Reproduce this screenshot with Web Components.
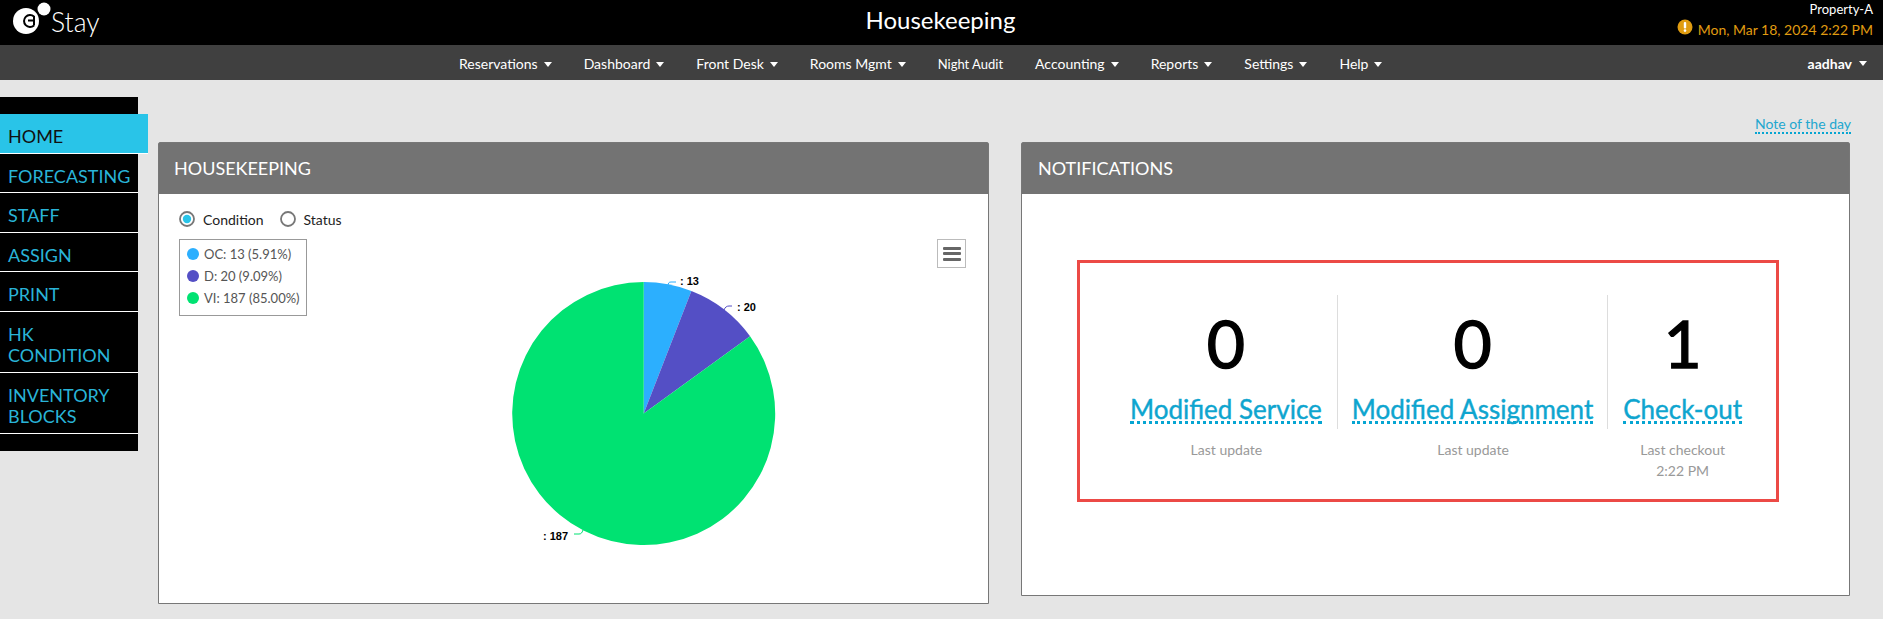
<!DOCTYPE html>
<html lang="en">
<head>
<meta charset="utf-8">
<title>Housekeeping</title>
<style>
  html, body { margin: 0; padding: 0; }
  body { background: #e5e5e5; font-family: Lato, "Open Sans", sans-serif; color: #333; }
</style>
</head>
<body>
<app-header page-title="Housekeeping" property="Property-A" clock="Mon, Mar 18, 2024 2:22 PM"></app-header>
<app-nav user="aadhav">
  <nav-item>Reservations</nav-item>
  <nav-item>Dashboard</nav-item>
  <nav-item>Front Desk</nav-item>
  <nav-item>Rooms Mgmt</nav-item>
  <nav-item plain>Night Audit</nav-item>
  <nav-item>Accounting</nav-item>
  <nav-item>Reports</nav-item>
  <nav-item>Settings</nav-item>
  <nav-item>Help</nav-item>
</app-nav>
<page-shell>
  <side-menu slot="side">
    <side-item active>HOME</side-item>
    <side-item>FORECASTING</side-item>
    <side-item>STAFF</side-item>
    <side-item>ASSIGN</side-item>
    <side-item>PRINT</side-item>
    <side-item>HK<br>CONDITION</side-item>
    <side-item>INVENTORY<br>BLOCKS</side-item>
  </side-menu>
  <dash-panel heading="HOUSEKEEPING" tall>
    <condition-radios></condition-radios>
    <pie-chart></pie-chart>
  </dash-panel>
  <dash-panel heading="NOTIFICATIONS">
    <stat-box>
      <stat-tile value="0" label="Modified Service" note="Last update"></stat-tile>
      <stat-tile value="0" label="Modified Assignment" note="Last update" narrow></stat-tile>
      <stat-tile value="1" label="Check-out" note="Last checkout" extra="2:22 PM" last></stat-tile>
    </stat-box>
  </dash-panel>
</page-shell>

<script>
// Small helper so each element only has to supply its markup.
function shadow (el, html) {
  el.attachShadow({ mode: 'open' }).innerHTML = html
}

customElements.define('app-header', class extends HTMLElement {
  connectedCallback () {
    shadow(this, `
      <style>
        :host { display: grid; grid-template-columns: 1fr auto 1fr; align-items: center; height: 45px; background: #000; color: #fff; }
        .brand { display: flex; align-items: center; padding-left: 12px; }
        .brand svg { margin-top: -9px; }
        .brand span { font-size: 26.5px; font-weight: 300; line-height: 31px; }
        h1 { margin: 0 2px 6px 0; font-size: 24px; font-weight: 400; }
        .info { justify-self: end; align-self: start; text-align: right; padding: 1px 10px 0 0; font-size: 13px; }
        .prop { line-height: 17px; }
        .time { display: flex; align-items: center; justify-content: flex-end; gap: 5px; margin-top: 1px; color: #e09c10; font-size: 14px; line-height: 22px; }
        .time svg { margin-top: -6px; }
      </style>
      <div class="brand">
        <svg width="39" height="36" viewBox="0 0 39 36">
          <circle cx="14" cy="21" r="13" fill="#fff"/>
          <circle cx="32" cy="9" r="6.5" fill="#fff"/>
          <path d="M22 16.5a6 6 0 1 0 0 9" fill="none" stroke="#000" stroke-width="2"/>
          <path d="M16 20.5h6v5M22 16v9.5" fill="none" stroke="#000" stroke-width="2"/>
        </svg>
        <span>Stay</span>
      </div>
      <h1>${this.getAttribute('page-title')}</h1>
      <div class="info">
        <div class="prop">${this.getAttribute('property')}</div>
        <div class="time">
          <svg width="16" height="16" viewBox="0 0 16 16"><circle cx="8" cy="8" r="7.5" fill="#e09c10"/><rect x="6.8" y="3" width="2.4" height="6.4" rx="1" fill="#fff"/><circle cx="8" cy="11.6" r="1.3" fill="#fff"/></svg>
          <span>${this.getAttribute('clock')}</span>
        </div>
      </div>`)
  }
})

customElements.define('app-nav', class extends HTMLElement {
  connectedCallback () {
    shadow(this, `
      <style>
        :host { display: flex; align-items: center; height: 35px; box-sizing: border-box; padding: 2px 0 0 459px; background: #404040; color: #fff; }
        .items { display: flex; align-items: center; gap: 32px; }
        .user { margin-left: auto; padding-right: 16px; font-size: 14px; font-weight: 700; display: flex; align-items: center; gap: 7px; }
        i { width: 0; height: 0; border: 4px solid transparent; border-top: 5px solid #fff; border-bottom: 0; }
      </style>
      <div class="items"><slot></slot></div>
      <div class="user">${this.getAttribute('user')}<i></i></div>`)
  }
})

customElements.define('nav-item', class extends HTMLElement {
  connectedCallback () {
    const plain = this.hasAttribute('plain')
    shadow(this, `
      <style>
        :host { display: flex; align-items: center; gap: 6px; font-size: ${plain ? 13 : 14}px; white-space: nowrap; }
        i { width: 0; height: 0; border: 4px solid transparent; border-top: 5px solid #fff; border-bottom: 0; margin-top: 2px; }
      </style>
      <slot></slot>${plain ? '' : '<i></i>'}`)
  }
})

customElements.define('page-shell', class extends HTMLElement {
  connectedCallback () {
    shadow(this, `
      <style>
        :host { display: flex; align-items: flex-start; }
        .main { flex: 1; min-width: 0; margin-left: 20px; padding-right: 33px; }
        .note { display: flex; justify-content: flex-end; height: 62px; align-items: flex-start; margin-right: -1px; }
        .note a { margin-top: 35px; font-size: 14px; line-height: 17px; color: #22a7cf; border-bottom: 2px dotted #06a5d2; }
        .cols { display: grid; grid-template-columns: 831fr 829fr; gap: 32px; align-items: start; }
      </style>
      <slot name="side"></slot>
      <div class="main">
        <div class="note"><a>Note of the day</a></div>
        <div class="cols"><slot></slot></div>
      </div>`)
  }
})

customElements.define('side-menu', class extends HTMLElement {
  connectedCallback () {
    shadow(this, `
      <style>
        :host { display: block; width: 138px; margin-top: 17px; padding: 17px 0; background: #000; }
      </style>
      <slot></slot>`)
  }
})

customElements.define('side-item', class extends HTMLElement {
  connectedCallback () {
    const active = this.hasAttribute('active')
    shadow(this, `
      <style>
        :host { display: block; box-sizing: border-box; width: ${active ? 148 : 138}px; padding: 12px 8px 5px; font-size: 18px; line-height: 21.5px; background: ${active ? '#29c4e8' : '#000'}; color: ${active ? '#111' : '#29b4d8'}; border-bottom: 1px solid #fff; }
      </style>
      <slot></slot>`)
  }
})

customElements.define('dash-panel', class extends HTMLElement {
  connectedCallback () {
    const tall = this.hasAttribute('tall')
    shadow(this, `
      <style>
        :host { display: block; box-sizing: border-box; height: ${tall ? 462 : 454}px; background: #fff; border: 1px solid #777; border-radius: 2px 2px 0 0; }
        h2 { margin: 0; height: 51px; box-sizing: border-box; padding: 13px ${tall ? 15 : 16}px 0; background: #737373; color: #fff; font-size: 18px; line-height: 24px; font-weight: 400; }
      </style>
      <h2>${this.getAttribute('heading')}</h2>
      <slot></slot>`)
  }
})

customElements.define('condition-radios', class extends HTMLElement {
  connectedCallback () {
    const radio = on => `<svg width="16" height="16" viewBox="0 0 16 16"><circle cx="8" cy="8" r="7" fill="#fff" stroke="#777" stroke-width="1.8"/>${on ? '<circle cx="8" cy="8" r="4.2" fill="#29c4e8"/>' : ''}</svg>`
    shadow(this, `
      <style>
        :host { display: flex; align-items: center; height: 42px; box-sizing: border-box; padding: 8px 0 0 20px; font-size: 14px; color: #222; }
        label { display: flex; align-items: center; gap: 8px; margin-right: 16px; }
      </style>
      <label>${radio(true)}Condition</label>
      <label>${radio(false)}Status</label>`)
  }
})

customElements.define('pie-chart', class extends HTMLElement {
  connectedCallback () {
    const series = [
      { name: 'OC', y: 13, pct: '5.91', color: '#2caffe' },
      { name: 'D', y: 20, pct: '9.09', color: '#544fc5' },
      { name: 'VI', y: 187, pct: '85.00', color: '#00e272' }
    ]
    const cx = 484.7
    const cy = 177.6
    const r = 131.5
    const total = series.reduce((sum, s) => sum + s.y, 0)
    let start = 0
    const slices = series.map(s => {
      const end = start + s.y / total * Math.PI * 2
      const point = a => `${(cx + r * Math.sin(a)).toFixed(2)} ${(cy - r * Math.cos(a)).toFixed(2)}`
      const large = end - start > Math.PI ? 1 : 0
      const d = `M${cx} ${cy}L${point(start)}A${r} ${r} 0 ${large} 1 ${point(end)}Z`
      start = end
      return `<path d="${d}" fill="${s.color}"/>`
    }).join('')
    const legend = series.map(s => `<div class="row"><b style="background:${s.color}"></b>${s.name}: ${s.y} (${s.pct}%)</div>`).join('')
    shadow(this, `
      <style>
        :host { display: block; position: relative; height: 367px; }
        svg.pie { display: block; }
        text { font: 700 11px "Liberation Sans", Arial, sans-serif; fill: #000; }
        .legend { position: absolute; left: 20px; top: 3px; box-sizing: border-box; width: 128px; height: 77px; padding: 3px 0 0 7px; border: 1px solid #999; background: #fff; font-size: 13px; color: #555; }
        .row { display: flex; align-items: center; gap: 5px; height: 22px; white-space: nowrap; }
        .row b { width: 12px; height: 12px; border-radius: 50%; }
        .menu { position: absolute; left: 778px; top: 3px; box-sizing: border-box; width: 29px; height: 29px; border: 1px solid #bbb; display: flex; flex-direction: column; justify-content: center; align-items: center; gap: 2.5px; }
        .menu i { width: 18px; height: 3px; background: #666; border-radius: 1px; }
      </style>
      <svg class="pie" width="829" height="367" viewBox="0 0 829 367">
        ${slices}
        <g fill="none" stroke-width="1">
          <path d="M509 50c0-3 1-4 3-4h5" stroke="#2caffe"/>
          <path d="M565 74c1-3 3-4 5-4h3" stroke="#544fc5"/>
          <path d="M424 294c-1 3-2 4-4 4h-5" stroke="#00e272"/>
        </g>
        <text x="521" y="49">: 13</text>
        <text x="578" y="75">: 20</text>
        <text x="384" y="304">: 187</text>
      </svg>
      <div class="legend">${legend}</div>
      <div class="menu"><i></i><i></i><i></i></div>`)
  }
})

customElements.define('stat-box', class extends HTMLElement {
  connectedCallback () {
    shadow(this, `
      <style>
        :host { display: flex; justify-content: center; box-sizing: border-box; width: 702px; height: 242px; margin: 66px 0 0 55px; padding: 32px 0 0 16px; border: 3px solid #ec4a46; }
      </style>
      <slot></slot>`)
  }
})

customElements.define('stat-tile', class extends HTMLElement {
  connectedCallback () {
    const extra = this.getAttribute('extra')
    const pad = this.hasAttribute('narrow') ? 14 : 15
    shadow(this, `
      <style>
        :host { display: block; text-align: center; }
        .top { box-sizing: border-box; height: 134px; padding: 0 ${pad}px; border-right: ${this.hasAttribute('last') ? 0 : '1px solid #ddd'}; }
        .num { font-size: 66px; line-height: 96px; height: 99px; color: #000; -webkit-text-stroke: 1.4px #000; }
        a { display: inline-block; vertical-align: top; padding-top: 3px; font-size: 26px; line-height: 24px; color: #0ea5cf; border-bottom: 3px dotted #06a5d2; white-space: nowrap; -webkit-text-stroke: 0.4px #0ea5cf; }
        .sub { margin-top: 10px; font-size: 14px; line-height: 21px; color: #999; }
      </style>
      <div class="top">
        <div class="num">${this.getAttribute('value')}</div>
        <a>${this.getAttribute('label')}</a>
      </div>
      <div class="sub">${this.getAttribute('note')}${extra ? `<br>${extra}` : ''}</div>`)
  }
})
</script>
</body>
</html>
